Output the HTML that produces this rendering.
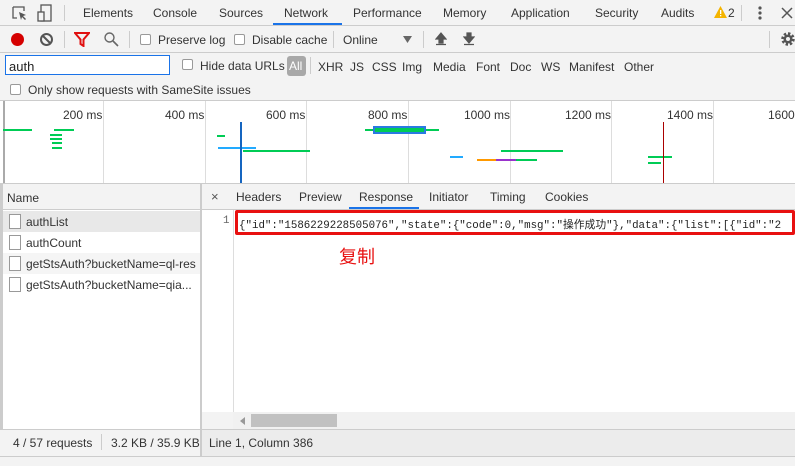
<!DOCTYPE html>
<html><head><meta charset="utf-8"><style>
*{box-sizing:border-box;margin:0;padding:0}
body{width:795px;height:466px;overflow:hidden;background:#f3f3f3;font-family:"Liberation Sans","Noto Sans CJK SC",sans-serif;font-size:12px;color:#333;position:relative}
.a{position:absolute}
.t{position:absolute;white-space:nowrap}
.cb{position:absolute;width:11px;height:11px;border:1px solid #999;background:#fff;border-radius:2px}
.hl{position:absolute;height:1px;background:#ccc}
.vl{position:absolute;width:1px;background:#ccc}
.mono{font-family:"Liberation Mono","Noto Sans CJK SC",monospace;font-size:10.8px}
</style></head><body>
<!-- top tabs -->
<div class="a" style="left:0;top:0;width:795px;height:26px;background:#f3f3f3"></div>
<svg class="a" style="left:10px;top:4px" width="20" height="18"><path d="M3 3h11v4M3 3v11h4" fill="none" stroke="#555" stroke-width="1.3"/><path d="M9 8l7 3-3 1 3 3-1 1-3-3-1 3z" fill="#555"/></svg>
<svg class="a" style="left:36px;top:3px" width="18" height="20"><rect x="5" y="2" width="10" height="16" fill="none" stroke="#555" stroke-width="1.3"/><rect x="2" y="9" width="6" height="9" fill="#f3f3f3" stroke="#555" stroke-width="1.3"/></svg>
<div class="vl" style="left:64px;top:5px;height:16px"></div>
<div class="t" style="left:83px;top:6px">Elements</div>
<div class="t" style="left:153px;top:6px">Console</div>
<div class="t" style="left:219px;top:6px">Sources</div>
<div class="t" style="left:284px;top:6px;color:#333">Network</div>
<div class="a" style="left:273px;top:23px;width:69px;height:2px;background:#1a73e8"></div>
<div class="t" style="left:353px;top:6px">Performance</div>
<div class="t" style="left:443px;top:6px">Memory</div>
<div class="t" style="left:511px;top:6px">Application</div>
<div class="t" style="left:595px;top:6px">Security</div>
<div class="t" style="left:661px;top:6px">Audits</div>
<svg class="a" style="left:714px;top:6px" width="13" height="12"><path d="M6.5 0L13 12H0z" fill="#f4b400"/><rect x="6" y="4" width="1.3" height="4" fill="#fff"/><rect x="6" y="9" width="1.3" height="1.3" fill="#fff"/></svg>
<div class="t" style="left:728px;top:6px">2</div>
<div class="vl" style="left:741px;top:5px;height:16px"></div>
<svg class="a" style="left:757px;top:5px" width="6" height="16"><circle cx="3" cy="3" r="1.6" fill="#555"/><circle cx="3" cy="8" r="1.6" fill="#555"/><circle cx="3" cy="13" r="1.6" fill="#555"/></svg>
<svg class="a" style="left:781px;top:7px" width="12" height="12"><path d="M1 1l10 10M11 1L1 11" stroke="#555" stroke-width="1.5"/></svg>
<div class="hl" style="left:0;top:25px;width:795px"></div>
<!-- toolbar -->
<div class="a" style="left:11px;top:33px;width:13px;height:13px;border-radius:50%;background:#d50000"></div>
<svg class="a" style="left:39px;top:32px" width="15" height="15"><circle cx="7.5" cy="7.5" r="5.5" fill="none" stroke="#555" stroke-width="2"/><path d="M3.5 3.5l8 8" stroke="#555" stroke-width="2"/></svg>
<div class="vl" style="left:64px;top:31px;height:17px"></div>
<svg class="a" style="left:74px;top:32px" width="16" height="15"><path d="M1 1h14L9.5 7.5V14l-3-2V7.5z" fill="none" stroke="#e01010" stroke-width="2"/></svg>
<svg class="a" style="left:103px;top:31px" width="16" height="16"><circle cx="6.5" cy="6.5" r="4.5" fill="none" stroke="#666" stroke-width="1.4"/><path d="M10 10l5 5" stroke="#666" stroke-width="1.6"/></svg>
<div class="vl" style="left:129px;top:31px;height:17px"></div>
<div class="cb" style="left:140px;top:34px"></div>
<div class="t" style="left:158px;top:33px">Preserve log</div>
<div class="cb" style="left:234px;top:34px"></div>
<div class="t" style="left:252px;top:33px">Disable cache</div>
<div class="vl" style="left:333px;top:31px;height:17px"></div>
<div class="t" style="left:343px;top:33px">Online</div>
<svg class="a" style="left:403px;top:36px" width="9" height="7"><path d="M0 0h9L4.5 7z" fill="#666"/></svg>
<div class="vl" style="left:423px;top:31px;height:17px"></div>
<svg class="a" style="left:435px;top:32px" width="12" height="14"><path d="M6 1L1 7h3v4h4V7h3z M1 12.5h10" fill="#555" stroke="#555" stroke-width="1.2"/></svg>
<svg class="a" style="left:463px;top:32px" width="12" height="14"><path d="M6 11L1 5h3V1h4v4h3z M1 12.5h10" fill="#555" stroke="#555" stroke-width="1.2"/></svg>
<div class="vl" style="left:769px;top:31px;height:17px"></div>
<svg class="a" style="left:780px;top:31px" width="15" height="16"><circle cx="8" cy="8" r="5" fill="none" stroke="#555" stroke-width="3.5" stroke-dasharray="2.2 1.7"/><circle cx="8" cy="8" r="4.5" fill="#555"/><circle cx="8" cy="8" r="2" fill="#f3f3f3"/></svg>
<div class="hl" style="left:0;top:52px;width:795px"></div>
<!-- filter row -->
<div class="a" style="left:5px;top:55px;width:165px;height:20px;background:#fff;border:1px solid #1a73e8"></div>
<div class="t" style="left:9px;top:59px;font-size:13px;color:#222">auth</div>
<div class="cb" style="left:182px;top:59px"></div>
<div class="t" style="left:200px;top:59px">Hide data URLs</div>
<div class="a" style="left:287px;top:56px;width:19px;height:20px;background:#a8a8a8;border-radius:3px"></div>
<div class="t" style="left:289px;top:59px;color:#fff">All</div>
<div class="vl" style="left:310px;top:57px;height:17px"></div>
<div class="t" style="left:318px;top:60px">XHR</div>
<div class="t" style="left:350px;top:60px">JS</div>
<div class="t" style="left:372px;top:60px">CSS</div>
<div class="t" style="left:402px;top:60px">Img</div>
<div class="t" style="left:433px;top:60px">Media</div>
<div class="t" style="left:476px;top:60px">Font</div>
<div class="t" style="left:510px;top:60px">Doc</div>
<div class="t" style="left:541px;top:60px">WS</div>
<div class="t" style="left:569px;top:60px">Manifest</div>
<div class="t" style="left:624px;top:60px">Other</div>
<div class="cb" style="left:10px;top:84px"></div>
<div class="t" style="left:28px;top:83px">Only show requests with SameSite issues</div>
<div class="hl" style="left:0;top:100px;width:795px"></div>
<!-- overview -->
<div class="a" style="left:0;top:101px;width:795px;height:82px;background:#fff"></div>
<div class="a" style="left:3px;top:101px;width:2px;height:82px;background:#aaa"></div>
<div class="vl" style="left:103px;top:101px;height:82px;background:#ddd"></div>
<div class="vl" style="left:205px;top:101px;height:82px;background:#ddd"></div>
<div class="vl" style="left:306px;top:101px;height:82px;background:#ddd"></div>
<div class="vl" style="left:408px;top:101px;height:82px;background:#ddd"></div>
<div class="vl" style="left:510px;top:101px;height:82px;background:#ddd"></div>
<div class="vl" style="left:611px;top:101px;height:82px;background:#ddd"></div>
<div class="vl" style="left:713px;top:101px;height:82px;background:#ddd"></div>
<div class="t" style="left:63px;top:108px">200 ms</div>
<div class="t" style="left:165px;top:108px">400 ms</div>
<div class="t" style="left:266px;top:108px">600 ms</div>
<div class="t" style="left:368px;top:108px">800 ms</div>
<div class="t" style="left:464px;top:108px">1000 ms</div>
<div class="t" style="left:565px;top:108px">1200 ms</div>
<div class="t" style="left:667px;top:108px">1400 ms</div>
<div class="t" style="left:768px;top:108px">1600</div>
<div class="a" style="left:3px;top:129px;width:29px;height:2px;background:#0c5"></div>
<div class="a" style="left:54px;top:129px;width:20px;height:2px;background:#0c5"></div>
<div class="a" style="left:50px;top:134px;width:12px;height:2px;background:#0c5"></div>
<div class="a" style="left:50px;top:138px;width:12px;height:2px;background:#0c5"></div>
<div class="a" style="left:52px;top:142px;width:10px;height:2px;background:#0c5"></div>
<div class="a" style="left:52px;top:147px;width:10px;height:2px;background:#0c5"></div>
<div class="a" style="left:217px;top:135px;width:8px;height:2px;background:#0c5"></div>
<div class="a" style="left:218px;top:147px;width:38px;height:2px;background:#2af"></div>
<div class="a" style="left:243px;top:150px;width:67px;height:2px;background:#0c5"></div>
<div class="a" style="left:240px;top:122px;width:2px;height:61px;background:#1565c0"></div>
<div class="a" style="left:365px;top:129px;width:8px;height:2px;background:#0c5"></div>
<div class="a" style="left:373px;top:126px;width:53px;height:8px;background:#0c5;border:2px solid #2a7ae2"></div>
<div class="a" style="left:426px;top:129px;width:13px;height:2px;background:#0c5"></div>
<div class="a" style="left:450px;top:156px;width:13px;height:2px;background:#2af"></div>
<div class="a" style="left:501px;top:150px;width:62px;height:2px;background:#0c5"></div>
<div class="a" style="left:477px;top:159px;width:19px;height:2px;background:#f90"></div>
<div class="a" style="left:496px;top:159px;width:20px;height:2px;background:#93c"></div>
<div class="a" style="left:516px;top:159px;width:21px;height:2px;background:#0c5"></div>
<div class="a" style="left:648px;top:156px;width:24px;height:2px;background:#0c5"></div>
<div class="a" style="left:648px;top:162px;width:13px;height:2px;background:#0c5"></div>
<div class="a" style="left:663px;top:122px;width:1px;height:61px;background:#a00"></div>
<div class="hl" style="left:0;top:183px;width:795px"></div>
<!-- left panel -->
<div class="a" style="left:0;top:184px;width:200px;height:246px;background:#fff"></div>
<div class="a" style="left:0;top:184px;width:200px;height:26px;background:#f3f3f3"></div>
<div class="t" style="left:7px;top:191px">Name</div>
<div class="hl" style="left:0;top:209px;width:200px"></div>
<div class="a" style="left:3px;top:211px;width:197px;height:21px;background:#e8e8e8"></div>
<div class="a" style="left:3px;top:253px;width:197px;height:21px;background:#f5f5f5"></div>
<div class="cb" style="left:9px;top:214px;width:12px;height:15px;border-radius:0"></div>
<div class="cb" style="left:9px;top:235px;width:12px;height:15px;border-radius:0"></div>
<div class="cb" style="left:9px;top:256px;width:12px;height:15px;border-radius:0"></div>
<div class="cb" style="left:9px;top:277px;width:12px;height:15px;border-radius:0"></div>
<div class="t" style="left:26px;top:215px">authList</div>
<div class="t" style="left:26px;top:236px">authCount</div>
<div class="t" style="left:26px;top:257px">getStsAuth?bucketName=ql-res</div>
<div class="t" style="left:26px;top:278px">getStsAuth?bucketName=qia...</div>
<div class="a" style="left:0;top:184px;width:3px;height:246px;background:#ccc"></div>
<div class="a" style="left:200px;top:184px;width:2px;height:272px;background:#ccc"></div>
<!-- right panel -->
<div class="a" style="left:202px;top:210px;width:593px;height:202px;background:#fff"></div>
<div class="t" style="left:211px;top:189px;font-size:13px;color:#555">×</div>
<div class="t" style="left:236px;top:190px">Headers</div>
<div class="t" style="left:299px;top:190px">Preview</div>
<div class="t" style="left:359px;top:190px">Response</div>
<div class="a" style="left:349px;top:207px;width:70px;height:2px;background:#1a73e8"></div>
<div class="t" style="left:429px;top:190px">Initiator</div>
<div class="t" style="left:490px;top:190px">Timing</div>
<div class="t" style="left:545px;top:190px">Cookies</div>
<div class="hl" style="left:202px;top:209px;width:593px"></div>
<div class="vl" style="left:233px;top:210px;height:202px;background:#ddd"></div>
<div class="t mono" style="left:223px;top:215px;color:#666">1</div>
<div class="t mono" style="left:239px;top:216px;color:#222">{"id":"1586229228505076","state":{"code":0,"msg":"操作成功"},"data":{"list":[{"id":"2</div>
<div class="a" style="left:235px;top:210px;width:560px;height:25px;border:3px solid #e81010;border-radius:2px"></div>
<div class="t" style="left:339px;top:243px;font-size:18px;color:#e81010">复制</div>
<div class="a" style="left:233px;top:412px;width:562px;height:18px;background:#f1f1f1"></div>
<svg class="a" style="left:240px;top:417px" width="5" height="8"><path d="M5 0v8L0 4z" fill="#999"/></svg>
<div class="a" style="left:251px;top:414px;width:86px;height:13px;background:#c1c1c1"></div>
<!-- status bars -->
<div class="hl" style="left:0;top:429px;width:795px"></div>
<div class="a" style="left:0;top:430px;width:200px;height:26px;background:#f3f3f3"></div>
<div class="a" style="left:202px;top:430px;width:593px;height:26px;background:#ececec"></div>
<div class="t" style="left:13px;top:436px">4 / 57 requests</div>
<div class="vl" style="left:101px;top:434px;height:16px"></div>
<div class="t" style="left:111px;top:436px">3.2 KB / 35.9 KB</div>
<div class="t" style="left:209px;top:436px">Line 1, Column 386</div>
<div class="hl" style="left:0;top:456px;width:795px"></div>
</body></html>
